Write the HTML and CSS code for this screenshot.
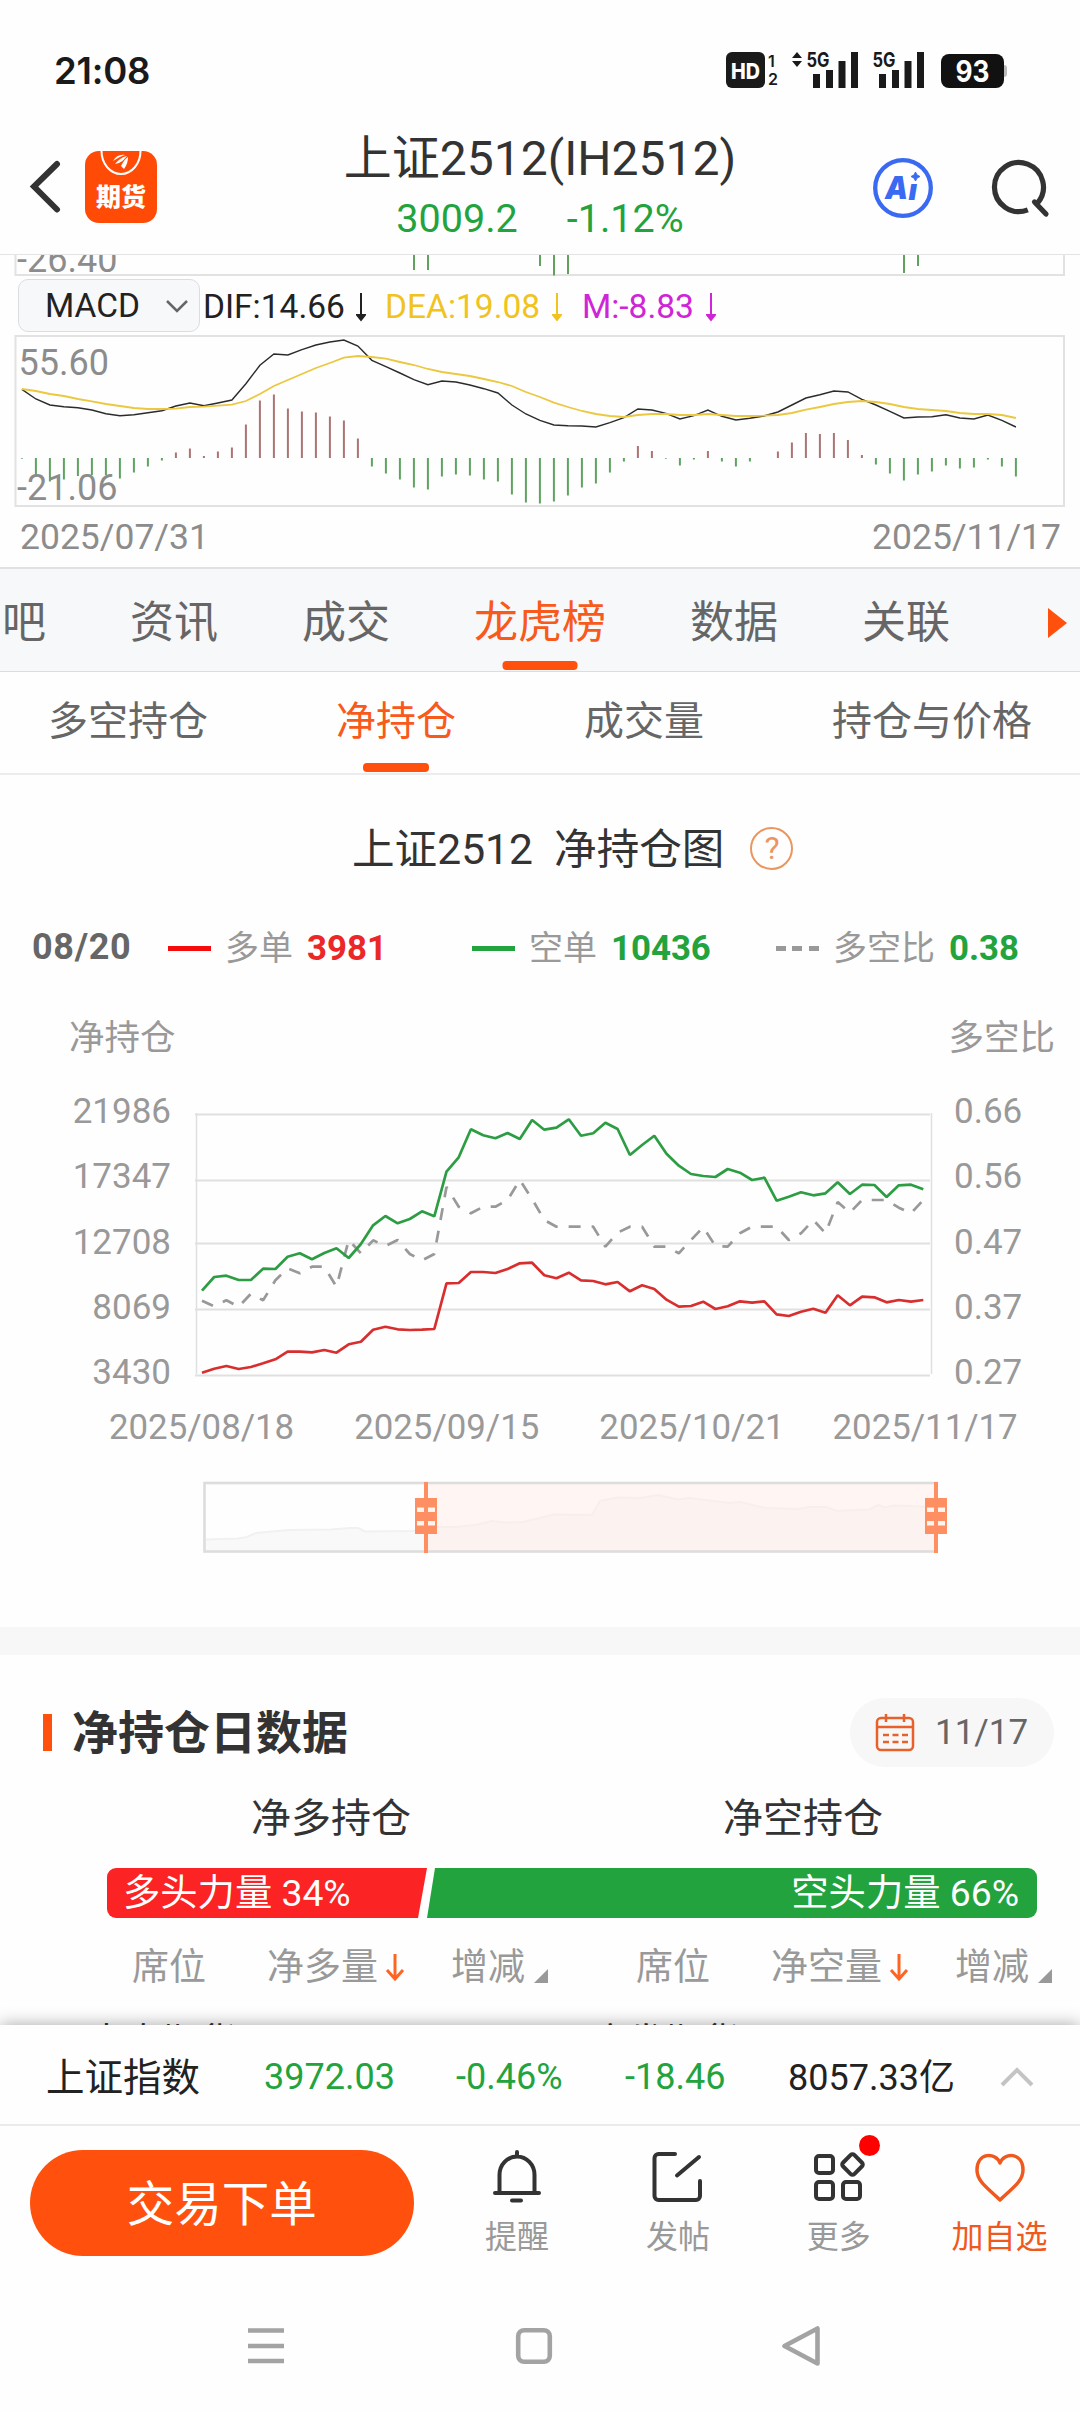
FILE: index.html
```html
<!DOCTYPE html>
<html lang="zh-CN">
<head>
    <meta charset="UTF-8">
    <meta name="viewport" content="width=device-width, initial-scale=1.0">
    <title>上证2512 净持仓</title>
    <link rel="stylesheet" href="styles.css">
</head>
<body>
    <div class="status-bar">
        <span class="time">21:08</span>
        <svg class="status-icons" width="290" height="44" viewBox="724 48 290 44">
            <rect x="726" y="52" width="39" height="36" rx="6" fill="#1a1a1a"/>
            <text x="745.5" y="79" font-size="22" font-weight="800" fill="#fff" text-anchor="middle" textLength="29" lengthAdjust="spacingAndGlyphs">HD</text>
            <text x="768" y="66.500" font-size="16" font-weight="600">1</text>
            <text x="768" y="84.500" font-size="16" font-weight="600">2</text>
            <path d="M792 58l5-6 5 6zM792 61h10l-5 6z"/>
            <text x="806.500" y="67" font-size="20" font-weight="700" textLength="23" lengthAdjust="spacingAndGlyphs">5G</text>
            <path d="M813 74h7v14h-7zM826 70h7v18h-7zM838.500 61h7v27h-7zM851 52h7v36h-7z"/>
            <text x="872.500" y="67" font-size="20" font-weight="700" textLength="23" lengthAdjust="spacingAndGlyphs">5G</text>
            <path d="M879 74h7v14h-7zM892 70h7v18h-7zM904.500 61h7v27h-7zM917 52h7v36h-7z"/>
            <rect x="1000" y="65" width="7" height="12" rx="3" fill="#bbb"/>
            <rect x="941" y="54" width="63" height="34" rx="8" fill="#111"/>
            <text x="972.500" y="82" font-size="30" font-weight="700" fill="#fff" text-anchor="middle" textLength="34" lengthAdjust="spacingAndGlyphs">93</text>
        </svg>
    </div>

    <div class="header">
        <svg class="back" width="34" height="54" viewBox="0 0 34 54"><path d="M28 4L5 26.500l23 23"/></svg>
        <div class="logo">
            <svg width="72" height="34" viewBox="0 0 72 34">
                <path d="M16.500 0a19.500 23 0 0 0 39 0" fill="none" stroke="#fff" stroke-width="2"/>
                <path d="M28 10c3-5 7-7 12-6-4 1-7 3-12 6zM30 13c3-4 7-7 12-8-3 4-6 7-12 8zM36 15c2-4 4-7 7-9 0 4-1 8-4 12z" fill="#fff"/>
            </svg>
            <span>期货</span>
        </div>
        <div class="title">
            <h1>上证2512(IH2512)</h1>
            <p><span>3009.2</span><span>-1.12%</span></p>
        </div>
        <svg class="ai" width="60" height="60" viewBox="0 0 60 60">
            <circle cx="30" cy="30" r="27.800" fill="none" stroke="#3a6af2" stroke-width="4.300"/>
            <text x="12" y="41" font-size="32" font-weight="900" font-style="italic" textLength="23" lengthAdjust="spacingAndGlyphs">A</text>
            <text x="35.500" y="41.500" font-size="29" font-weight="900" font-style="italic">ı</text>
            <path d="M42.500 14l1.500 3 3 1.500-3 1.500-1.500 3-1.500-3-3-1.500 3-1.500z" stroke="#3a6af2" fill="#3a6af2"/>
        </svg>
        <svg class="search" width="60" height="60" viewBox="0 0 60 60">
            <path d="M47.200 45.400A24.500 24.500 0 1 0 37.800 51.900" stroke-linecap="butt"/>
            <path d="M44.500 44l11.500 12"/>
        </svg>
    </div>

    <div class="content">
        <div class="kline">
            <svg id="prevChart" width="1080" height="21" viewBox="0 255 1080 21">
                <text x="17" y="272" class="axis">-26.40</text>
                <path d="M15.500 255V275H1064V255" class="frame"/>
                <path d="M414 255V270M428 255V270M540 255V266M554 255V275.500M568 255V274M904 255V273M918 255V266" class="bar-down"/>
            </svg>
            <div class="indicator">
                <div class="select">MACD
                    <svg width="24" height="14" viewBox="0 0 24 14"><path d="M2 2l10 10L22 2" fill="none" stroke="#666" stroke-width="2.500"/></svg>
                </div>
                <span class="dif">DIF:14.66<svg width="10" height="30" viewBox="0 0 10 30"><path d="M5 1v24"/><path d="M1 23h8l-4 5z"/></svg></span>
                <span class="dea">DEA:19.08<svg width="10" height="30" viewBox="0 0 10 30"><path d="M5 1v24"/><path d="M1 23h8l-4 5z"/></svg></span>
                <span class="m">M:-8.83<svg width="10" height="30" viewBox="0 0 10 30"><path d="M5 1v24"/><path d="M1 23h8l-4 5z"/></svg></span>
            </div>
            <svg id="macdChart" width="1080" height="172" viewBox="0 335 1080 172">
                <path d="M15.500 336H1064V506H15.500z" class="frame"/>
                <g id="macdSeries"></g>
                <text x="18.500" y="375" class="axis">55.60</text>
                <text x="17" y="500" class="axis">-21.06</text>
            </svg>
            <div class="kline-dates"><span>2025/07/31</span><span>2025/11/17</span></div>
        </div>

        <div class="tabs">
            <span>吧</span>
            <span>资讯</span>
            <span>成交</span>
            <span class="active">龙虎榜</span>
            <span>数据</span>
            <span>关联</span>
            <i class="more-arrow"></i>
        </div>
        <div class="sub-tabs">
            <span>多空持仓</span>
            <span class="active">净持仓</span>
            <span>成交量</span>
            <span>持仓与价格</span>
        </div>

        <div class="chart-title">
            <h2>上证2512&nbsp; 净持仓图</h2>
            <span class="help">?</span>
        </div>
        <div class="legend">
            <b class="date">08/20</b>
            <div><i class="line red"></i>多单<b class="red">3981</b></div>
            <div><i class="line green"></i>空单<b class="green">10436</b></div>
            <div><i class="line dash"></i>多空比<b class="green">0.38</b></div>
        </div>
        <div class="axis-names"><span>净持仓</span><span>多空比</span></div>
        <div class="net-chart">
            <div class="y-axis left"><span>21986</span><span>17347</span><span>12708</span><span>8069</span><span>3430</span></div>
            <svg width="760" height="286" viewBox="186 1100 760 286">
                <path d="M195 1114.500H930M195 1180.500H930M195 1243.500H930M195 1309.500H930M195 1375.500H930" class="grid"/>
                <path d="M196.500 1113V1374M931.500 1113V1374" class="grid thin"/>
                <g id="netSeries"></g>
            </svg>
            <div class="y-axis right"><span>0.66</span><span>0.56</span><span>0.47</span><span>0.37</span><span>0.27</span></div>
        </div>
        <div class="x-axis"><span>2025/08/18</span><span>2025/09/15</span><span>2025/10/21</span><span>2025/11/17</span></div>

        <svg class="zoom-bar" width="760" height="76" viewBox="196 1479 760 76">
            <g id="zoomShadow"></g>
            <rect x="426" y="1484" width="510" height="67" fill="#ffece8" fill-opacity="0.5"/>
            <rect x="204.500" y="1483" width="732" height="68.500" fill="none" stroke="#ddd" stroke-width="2.600"/>
            <g id="handle" fill="#fd8f62">
                <rect x="424" y="1482" width="4" height="71"/>
                <rect x="415" y="1498" width="22" height="36"/>
                <path d="M417 1507.500h7v4.500h-7zM428 1507.500h7v4.500h-7zM417 1521h7v4.500h-7zM428 1521h7v4.500h-7z" fill="#fff3ee"/>
            </g>
            <use href="#handle" x="510"/>
        </svg>

        <div class="divider"></div>

        <div class="section-head">
            <h3><span>净持仓日数据</span></h3>
            <div class="date-pill">
                <svg width="40" height="40" viewBox="0 0 40 40">
                    <rect x="2" y="5" width="36" height="32" rx="4"/>
                    <path d="M2 14h36M11 1v8M29 1v8"/>
                    <path d="M8 22h25M8 29h25" stroke-dasharray="6 3.500"/>
                </svg>
                11/17
            </div>
        </div>
        <div class="sides"><span>净多持仓</span><span>净空持仓</span></div>
        <div class="power">
            <div class="long">多头力量 34%</div>
            <div class="short">空头力量 66%</div>
        </div>
        <div class="columns">
            <div><span class="seat">席位</span><span class="volume">净多量<svg width="20" height="28" viewBox="0 0 20 28"><path d="M10 1v25M2 17l8 9 8-9"/></svg></span><span>增减<i></i></span></div>
            <div><span class="seat">席位</span><span class="volume">净空量<svg width="20" height="28" viewBox="0 0 20 28"><path d="M10 1v25M2 17l8 9 8-9"/></svg></span><span>增减<i></i></span></div>
        </div>
        <div class="seat-row"><span>中泰期货</span><span>广发期货</span></div>
    </div>

    <div class="footer">
        <div class="index-bar">
            <span class="name">上证指数</span>
            <span class="down price">3972.03</span>
            <span class="down pct">-0.46%</span>
            <span class="down diff">-18.46</span>
            <span class="amount">8057.33亿</span>
            <svg width="34" height="20" viewBox="0 0 34 20"><path d="M2 18L17 3l15 15" fill="none" stroke="#c4c4c4" stroke-width="4"/></svg>
        </div>
        <div class="actions">
            <button type="button">交易下单</button>
            <div class="action">
                <svg width="52" height="54" viewBox="0 0 52 54"><path d="M26 2v4M8.500 42V25a17.500 18.500 0 0 1 35 0v17M4 43h44M21 50.500h9"/></svg>
                <span>提醒</span>
            </div>
            <div class="action">
                <svg width="52" height="54" viewBox="0 0 52 54"><path d="M23 4H6.500a4 4 0 0 0-4 4v38a4 4 0 0 0 4 4H44a4 4 0 0 0 4-4V31M47 7L25 25.500"/></svg>
                <span>发帖</span>
            </div>
            <div class="action">
                <svg width="52" height="54" viewBox="0 0 52 54">
                    <rect x="3" y="6" width="17" height="17" rx="3"/><rect x="3" y="32" width="17" height="17" rx="3"/><rect x="30" y="32" width="17" height="17" rx="3"/>
                    <rect x="31.500" y="6.500" width="16" height="16" rx="2.500" transform="rotate(45 39.500 14.500)"/>
                </svg>
                <i class="badge"></i>
                <span>更多</span>
            </div>
            <div class="action favorite">
                <svg width="52" height="54" viewBox="0 0 52 54"><path d="M26 13C22 2 3 2 3 20c0 12 12 19 23 30 11-11 23-18 23-30C49 2 30 2 26 13z"/></svg>
                <span>加自选</span>
            </div>
        </div>
        <div class="nav-keys">
            <svg width="40" height="44" viewBox="0 0 40 44"><path d="M2 6.500h36M2 22h36M2 37h36"/></svg>
            <svg width="40" height="44" viewBox="0 0 40 44"><rect x="4.200" y="6.200" width="31.600" height="31.600" rx="6"/></svg>
            <svg width="44" height="44" viewBox="0 0 44 44"><path d="M34 4.500v35L1 22z" transform="translate(1.500 0)"/></svg>
        </div>
    </div>

    <script src="script.js"></script>
</body>
</html>
```
FILE: styles.css
```css
* {
    box-sizing: border-box;
}
body {
    margin: 0;
    width: 1080px;
    height: 2412px;
    overflow: hidden;
    background-color: #fefefe;
    color: #333;
    font-family: Roboto, "Noto Sans CJK SC", sans-serif;
}
h1, h2, h3, p {
    margin: 0;
    font-weight: normal;
}
svg {
    display: block;
    flex: none;
}
span {
    white-space: nowrap;
}
.red {
    color: #eb2727;
}
.green, .down {
    color: #22a33d;
}

/* status bar */
.status-bar {
    display: flex;
    justify-content: space-between;
    align-items: center;
    height: 140px;
    padding: 0 66px 0 54px;
    font-family: Inter, sans-serif;
    color: #1a1a1a;
}
.time {
    font-size: 36.500px;
    font-weight: 600;
    line-height: 44px;
    letter-spacing: -0.2px;
    padding-top: 2px;
}
.status-icons {
    fill: #1a1a1a;
}

/* header */
.header {
    display: flex;
    height: 115px;
    padding-left: 29px;
    border-bottom: 1px solid #e4e4e4;
}
.back {
    margin-top: 20px;
    fill: none;
    stroke: #333;
    stroke-width: 6;
    stroke-linecap: round;
}
.logo {
    width: 72px;
    height: 72px;
    margin: 11px 0 0 22px;
    border-radius: 14px;
    background-color: #ff4b05;
    color: #fff;
    font-size: 25px;
    font-weight: 900;
    line-height: 26px;
    text-align: center;
}
.title {
    flex: none;
    width: 766px;
    margin-top: -8px;
    text-align: center;
}
.title h1 {
    font-size: 48px;
    line-height: 54px;
}
.title p {
    display: flex;
    justify-content: center;
    gap: 49px;
    color: #22a33d;
    font-size: 39.500px;
    line-height: 46px;
    margin-top: 10px;
}
.ai {
    margin: 18px 0 0 -50px;
    fill: #3a6af2;
    font-family: Inter, sans-serif;
}
.search {
    margin: 18px 0 0 57px;
    fill: none;
    stroke: #333;
    stroke-width: 5.2;
    stroke-linecap: round;
}

.content {
    height: 1770px;
    overflow: hidden;
}

/* macd */
.axis {
    fill: #8c8c8c;
    font-size: 36px;
}
.frame {
    fill: none;
    stroke: #e2e2e2;
    stroke-width: 2;
}
.bar-down {
    fill: none;
    stroke: #5fa35f;
    stroke-width: 2;
}
.bar-up {
    fill: none;
    stroke: #ab7472;
    stroke-width: 2;
}
.dif-line {
    fill: none;
    stroke: #2b2b2b;
    stroke-width: 1.4;
}
.dea-line {
    fill: none;
    stroke: #ebc83f;
    stroke-width: 1.8;
}
.indicator {
    display: flex;
    align-items: center;
    height: 59px;
    padding-left: 18px;
    font-size: 33.500px;
}
.indicator span {
    display: flex;
    align-items: center;
    justify-content: space-between;
    flex: none;
    padding-top: 2px;
}
.indicator span svg {
    fill: currentColor;
    stroke: currentColor;
    stroke-width: 2;
}
.select {
    display: flex;
    align-items: center;
    justify-content: space-between;
    width: 182px;
    height: 53px;
    padding: 0 10px 0 26px;
    border: 1px solid #dcdde3;
    border-radius: 10px;
    background-color: #f7f8fa;
    color: #222;
}
.dif {
    width: 163px;
    margin-left: 3px;
    color: #222;
}
.dea {
    width: 177px;
    margin-left: 19px;
    color: #f0c31f;
}
.m {
    width: 134px;
    margin-left: 20px;
    color: #cf25d6;
}
.kline-dates {
    display: flex;
    justify-content: space-between;
    height: 60px;
    padding: 0 19px 0 20px;
    color: #8c8c8c;
    font-size: 35.500px;
    line-height: 60px;
}

/* tabs */
.tabs {
    display: flex;
    gap: 84px;
    height: 105px;
    padding-left: 2px;
    border-top: 2px solid #e0e1e3;
    border-bottom: 1px solid #dcdcdc;
    background-color: #f7f8fa;
    color: #666;
    font-size: 44px;
    line-height: 109px;
}
.tabs span, .sub-tabs span {
    position: relative;
}
.tabs .active, .sub-tabs .active {
    color: #f75a1b;
}
.active::after {
    content: "";
    position: absolute;
    left: 50%;
    bottom: 1px;
    width: 75px;
    height: 9px;
    border-radius: 4px;
    background-color: #ff510d;
    transform: translateX(-50%);
}
.more-arrow {
    margin: 39px 0 0 14px;
    height: 0;
    border: 15px solid transparent;
    border-left: 19px solid #ff510d;
    border-right: 0;
}
.sub-tabs {
    display: flex;
    justify-content: space-between;
    height: 103px;
    padding: 0 48px;
    border-bottom: 2px solid #ececec;
    color: #666;
    font-size: 40px;
    line-height: 100px;
}
.sub-tabs .active::after {
    width: 66px;
}

/* net position chart */
.chart-title {
    display: flex;
    align-items: center;
    height: 146px;
    padding-left: 352px;
}
.chart-title h2 {
    padding-bottom: 6px;
    font-size: 42.600px;
    white-space: nowrap;
}
.help {
    width: 43px;
    height: 43px;
    margin-left: 26px;
    border: 2px solid #e9965f;
    border-radius: 50%;
    color: #e9965f;
    font-size: 32px;
    line-height: 39px;
    text-align: center;
}
.legend {
    display: grid;
    grid-template-columns: 136px 304px 304px 304px;
    height: 54px;
    padding-left: 32px;
    color: #999;
    font-size: 34px;
    line-height: 52px;
}
.legend div {
    display: flex;
    align-items: center;
}
.legend .date {
    color: #666;
    font-size: 36px;
    letter-spacing: 0.7px;
}
.legend div b {
    margin-left: 14px;
    font-size: 34.800px;
}
.line {
    width: 43px;
    height: 5px;
    margin-right: 14px;
    background-color: #f40b0b;
}
.line.green {
    background-color: #22a33d;
}
.line.dash {
    background: repeating-linear-gradient(90deg, #999 0 10px, transparent 10px 16.5px);
}
.axis-names {
    display: flex;
    justify-content: space-between;
    height: 125px;
    padding: 37px 25px 0 69px;
    color: #999;
    font-size: 35.500px;
    line-height: 52px;
}
.net-chart {
    display: flex;
    height: 286px;
}
.y-axis {
    display: flex;
    flex: none;
    flex-direction: column;
    width: 186px;
    margin-top: -21px;
    color: #999;
    font-size: 35px;
    line-height: 65.300px;
}
.y-axis.left {
    padding-right: 15px;
    text-align: right;
}
.y-axis.right {
    padding-left: 8px;
}
.grid {
    fill: none;
    stroke: #e0e0e0;
    stroke-width: 2;
}
.grid.thin {
    stroke-width: 1.5;
}
.net-line {
    fill: none;
    stroke-width: 2.7;
    stroke-linejoin: bevel;
}
.x-axis {
    display: flex;
    gap: 60px;
    height: 93px;
    padding: 18px 0 0 109px;
    color: #999;
    font-size: 34.800px;
    line-height: 46px;
}
.x-axis span:last-child {
    margin-left: -12px;
}
.zoom-bar {
    margin-left: 196px;
}
.divider {
    height: 28px;
    margin-top: 72px;
    background-color: #f7f7f7;
}

/* daily data */
.section-head {
    display: flex;
    justify-content: space-between;
    padding: 43px 26px 0 43px;
}
.section-head h3 {
    display: flex;
    align-items: center;
    height: 68px;
    font-size: 46px;
    font-weight: bold;
}
.section-head h3 span {
    padding-bottom: 6px;
}
.section-head h3::before {
    content: "";
    width: 9px;
    height: 37px;
    margin-right: 20px;
    background-color: #ff510d;
}
.date-pill {
    display: flex;
    align-items: center;
    gap: 20px;
    width: 204px;
    height: 69px;
    padding-left: 25px;
    border-radius: 35px;
    background-color: #f7f7f7;
    color: #666;
    font-size: 35px;
    line-height: 66px;
}
.date-pill svg {
    fill: none;
    stroke: #e8612a;
    stroke-width: 2.5;
}
.sides {
    display: grid;
    grid-template-columns: 472px 472px;
    height: 101px;
    padding-left: 95px;
    font-size: 40px;
    line-height: 103px;
    text-align: center;
}
.power {
    display: flex;
    width: 930px;
    height: 50px;
    margin-left: 107px;
    border-radius: 9px;
    overflow: hidden;
    color: #fff;
    font-size: 37.300px;
    line-height: 51px;
}
.power .long {
    width: 320px;
    padding-left: 16px;
    background-color: #fb2323;
    clip-path: polygon(0 0, 100% 0, 311px 100%, 0 100%);
}
.power .short {
    flex: 1;
    padding-right: 18px;
    background-color: #22a33d;
    text-align: right;
    clip-path: polygon(8px 0, 100% 0, 100% 100%, 0 100%);
}
.columns {
    display: flex;
    height: 103px;
    padding-left: 132px;
    color: #999;
    font-size: 37px;
    line-height: 99px;
}
.columns div {
    display: flex;
    flex: none;
    width: 504px;
    height: 99px;
}
.columns span {
    display: flex;
    align-items: center;
}
.columns .seat {
    width: 135px;
}
.columns .volume {
    width: 184px;
}
.columns .volume svg {
    margin: -2px 0 0 7px;
    fill: none;
    stroke: #ff6422;
    stroke-width: 3;
}
.columns i {
    border: 7px solid #999;
    border-top-color: transparent;
    border-left-color: transparent;
    margin: 17px 0 0 9px;
}
.seat-row {
    display: flex;
    gap: 355px;
    padding-left: 88px;
    font-size: 37px;
    line-height: 44px;
    color: #333;
}

/* footer */
.footer {
    position: relative;
    height: 387px;
    background-color: #fefefe;
    box-shadow: 0 0 16px rgba(0,0,0,0.35);
}
.index-bar {
    display: flex;
    align-items: center;
    height: 101px;
    padding: 4px 0 0 46px;
    border-bottom: 2px solid #ebebeb;
    font-size: 36px;
    color: #222;
}
.index-bar .name {
    width: 218px;
    padding-bottom: 6px;
    font-size: 38.500px;
}
.index-bar .down {
    color: #22a33d;
}
.index-bar .price {
    width: 192px;
}
.index-bar .pct {
    width: 169px;
}
.index-bar .diff {
    width: 163px;
}
.index-bar .amount {
    width: 212px;
    padding-bottom: 6px;
}
.actions {
    display: flex;
    height: 172px;
    padding: 24px 0 0 30px;
}
button {
    width: 384px;
    height: 106px;
    margin-right: 23px;
    padding-bottom: 6px;
    border: none;
    border-radius: 53px;
    background-color: #ff510d;
    color: #fff;
    font-family: inherit;
    font-size: 47.500px;
}
.action {
    position: relative;
    display: flex;
    flex-direction: column;
    align-items: center;
    width: 161px;
    color: #999;
    font-size: 32px;
    line-height: 66px;
}
.action svg {
    fill: none;
    stroke: #333;
    stroke-width: 4;
    stroke-linecap: round;
    stroke-linejoin: round;
}
.favorite {
    color: #f0591d;
}
.favorite svg {
    stroke: #f0591d;
    stroke-width: 3.5;
}
.badge {
    position: absolute;
    top: -15px;
    left: 101px;
    width: 21px;
    height: 21px;
    border-radius: 50%;
    background-color: #f00;
}
.nav-keys {
    display: flex;
    align-items: center;
    gap: 228px;
    height: 96px;
    padding: 0 0 0 246px;
}
.nav-keys svg {
    fill: none;
    stroke: #a3a3a3;
    stroke-width: 4.6;
    stroke-linejoin: round;
}
```
FILE: script.js
```js
var hist = [-0.7, -17, -23.5, -21.5, -18, -17, -17, -20.5, -14.5, -8.5, -2.5, 5.5, 9.5, 2, 6.5, 10.5, 33.5, 57.5,
    63.5, 49.5, 46.5, 45.5, 41.5, 37.5, 19.5, -8.5, -15.5, -21.5, -29.5, -31.5, -18.5, -16.5, -17.5, -21.5, -23.5, -36.5,
    -44.5, -45.5, -43.5, -37.5, -29.5, -25.5, -14.5, -3.5, 12, 7, -0.7, -7.5, -1.5, 7, -3.5, -8.5, -3.5, 0,
    6.5, 15.5, 25, 24, 25, 18, 3, -6.5, -15.5, -22.5, -16.5, -13.5, -7.5, -10.5, -9.5, -1.5, -8.5, -18.5];
var dif = [448, 477, 495, 500, 503, 510, 521, 527, 524, 518, 512, 498, 489, 497, 489, 480, 431, 376,
    342, 345, 329, 315, 306, 300, 318, 361, 380, 399, 419, 434, 423, 426, 435, 446, 459, 495,
    522, 541, 555, 557, 558, 561, 548, 533, 507, 510, 520, 537, 527, 510, 529, 540, 535, 528,
    516, 495, 474, 464, 453, 456, 478, 495, 514, 534, 531, 530, 524, 534, 537, 525, 541, 561];
var dea = [447, 453, 462, 468, 477, 484, 492, 498, 504, 507, 507, 506, 501, 500, 497, 494, 483, 462,
    438, 420, 402, 384, 369, 353, 348, 351, 356, 366, 375, 387, 396, 402, 408, 417, 426, 438,
    456, 471, 488, 501, 513, 522, 528, 531, 525, 522, 522, 525, 525, 522, 525, 528, 528, 527,
    525, 519, 509, 501, 492, 486, 483, 486, 492, 501, 507, 510, 513, 519, 522, 522, 525, 534];

var shortPos = [632, 591, 587, 600, 600, 566, 567, 530, 520, 538, 519, 505, 534, 492, 436, 408, 430, 417, 394, 409,
    275, 232, 148, 166, 175, 159, 177, 120, 149, 143, 118, 167, 160, 128, 147, 225, 195, 167, 221, 257,
    282, 288, 291, 267, 278, 300, 293, 362, 350, 337, 346, 340, 307, 342, 314, 315, 351, 316, 314, 328];
var longPos = [878, 866, 858, 867, 861, 850, 838, 815, 815, 817, 810, 818, 793, 785, 749, 740, 748, 750, 749, 747,
    610, 609, 576, 576, 579, 567, 550, 548, 586, 595, 578, 601, 603, 613, 606, 634, 616, 627, 659, 680,
    678, 665, 687, 679, 664, 668, 664, 703, 708, 695, 686, 698, 646, 676, 650, 652, 667, 660, 665, 660];
var ratio = [662, 679, 661, 680, 641, 661, 601, 565, 580, 560, 560, 620, 480, 520, 481, 498, 480, 522, 541, 522,
    321, 380, 400, 380, 380, 360, 300, 357, 420, 440, 440, 440, 440, 500, 458, 440, 440, 500, 500, 520,
    480, 442, 498, 500, 460, 440, 440, 440, 480, 460, 420, 460, 366, 398, 360, 360, 360, 383, 400, 360];

function points(data, x0, step, y0) {
    return data.map(function(v, i) {
        return (x0 + i * step).toFixed(1) + ',' + (y0 + v / 3).toFixed(1);
    }).join(' ');
}

// MACD
var macd = '';
hist.forEach(function(v, i) {
    var x = (21.9 + i * 14).toFixed(1);
    if (v) {
        macd += '<path class="' + (v > 0 ? 'bar-up' : 'bar-down') + '" d="M' + x + ' 458V' + (458 - v) + '"/>';
    }
});
macd += '<polyline class="dif-line" points="' + points(dif, 21.9, 14, 240) + '"/>';
macd += '<polyline class="dea-line" points="' + points(dea, 21.9, 14, 240) + '"/>';
document.getElementById('macdSeries').innerHTML = macd;

// net positions
document.getElementById('netSeries').innerHTML =
    '<polyline class="net-line" stroke="#999" stroke-dasharray="12 11" points="' + points(ratio, 202, 12.225, 1080) + '"/>' +
    '<polyline class="net-line" stroke="#2d9d43" points="' + points(shortPos, 202, 12.225, 1080) + '"/>' +
    '<polyline class="net-line" stroke="#d92e2e" points="' + points(longPos, 202, 12.225, 1080) + '"/>';

// slider background
var shadow = [[206, 1539.5], [238, 1538.5], [247, 1537], [256, 1533], [289, 1530], [331, 1529.5], [350, 1528], [358, 1528], [365, 1531.5],
    [413, 1531], [426, 1527], [455, 1527], [475, 1525], [492, 1521], [506, 1522.5], [523, 1522], [554, 1514.5], [592, 1515],
    [600, 1501], [618, 1497.5], [641, 1498], [658, 1495], [678, 1499.5], [689, 1498], [730, 1503], [740, 1502],
    [765, 1508], [799, 1509], [809, 1507], [826, 1507], [837, 1511], [869, 1509.5], [878, 1505], [885, 1507.5], [895, 1505.5], [934, 1507]];
var line = shadow.map(function(p) { return p.join(','); }).join(' ');
document.getElementById('zoomShadow').innerHTML =
    '<polygon fill="#f9f9f9" points="206,1550 ' + line + ' 934,1550"/>' +
    '<polyline fill="none" stroke="#f1f1f1" stroke-width="2" points="' + line + '"/>';
```
